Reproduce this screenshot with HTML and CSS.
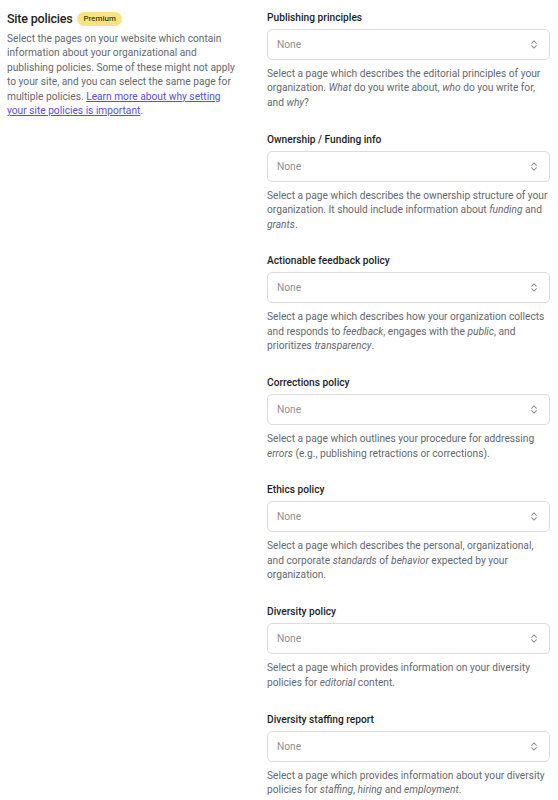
FILE: index.html
```html
<!DOCTYPE html>
<html>
<head>
<meta charset="utf-8">
<link rel="stylesheet" href="styles.css">
</head>
<body>
<div class="layout">
  <div class="intro">
    <div class="heading"><h2>Site policies</h2><span class="badge">Premium</span></div>
    <p class="desc">Select the pages on your website which contain information about your organizational and publishing policies. Some of these might not apply to your site, and you can select the same page for multiple policies. <a href="#">Learn more about why setting your site policies is important</a>.</p>
  </div>
  <div class="fields">
    <div class="field">
      <label>Publishing principles</label>
      <div class="select"><span>None</span><svg viewBox="0 0 10 14" width="8" height="11"><path d="M2 5.5 L5 2.5 L8 5.5 M2 8.5 L5 11.5 L8 8.5" fill="none" stroke="#8c8f94" stroke-width="1.3" stroke-linecap="round" stroke-linejoin="round"/></svg></div>
      <p class="help">Select a page which describes the editorial principles of your organization. <em>What</em> do you write about, <em>who</em> do you write for, and <em>why</em>?</p>
    </div>
    <div class="field">
      <label>Ownership / Funding info</label>
      <div class="select"><span>None</span><svg viewBox="0 0 10 14" width="8" height="11"><path d="M2 5.5 L5 2.5 L8 5.5 M2 8.5 L5 11.5 L8 8.5" fill="none" stroke="#8c8f94" stroke-width="1.3" stroke-linecap="round" stroke-linejoin="round"/></svg></div>
      <p class="help">Select a page which describes the ownership structure of your organization. It should include information about <em>funding</em> and <em>grants</em>.</p>
    </div>
    <div class="field">
      <label>Actionable feedback policy</label>
      <div class="select"><span>None</span><svg viewBox="0 0 10 14" width="8" height="11"><path d="M2 5.5 L5 2.5 L8 5.5 M2 8.5 L5 11.5 L8 8.5" fill="none" stroke="#8c8f94" stroke-width="1.3" stroke-linecap="round" stroke-linejoin="round"/></svg></div>
      <p class="help">Select a page which describes how your organization collects and responds to <em>feedback</em>, engages with the <em>public</em>, and prioritizes <em>transparency</em>.</p>
    </div>
    <div class="field">
      <label>Corrections policy</label>
      <div class="select"><span>None</span><svg viewBox="0 0 10 14" width="8" height="11"><path d="M2 5.5 L5 2.5 L8 5.5 M2 8.5 L5 11.5 L8 8.5" fill="none" stroke="#8c8f94" stroke-width="1.3" stroke-linecap="round" stroke-linejoin="round"/></svg></div>
      <p class="help">Select a page which outlines your procedure for addressing <em>errors</em> (e.g., publishing retractions or corrections).</p>
    </div>
    <div class="field">
      <label>Ethics policy</label>
      <div class="select"><span>None</span><svg viewBox="0 0 10 14" width="8" height="11"><path d="M2 5.5 L5 2.5 L8 5.5 M2 8.5 L5 11.5 L8 8.5" fill="none" stroke="#8c8f94" stroke-width="1.3" stroke-linecap="round" stroke-linejoin="round"/></svg></div>
      <p class="help">Select a page which describes the personal, organizational, and corporate <em>standards</em> of <em>behavior</em> expected by your organization.</p>
    </div>
    <div class="field">
      <label>Diversity policy</label>
      <div class="select"><span>None</span><svg viewBox="0 0 10 14" width="8" height="11"><path d="M2 5.5 L5 2.5 L8 5.5 M2 8.5 L5 11.5 L8 8.5" fill="none" stroke="#8c8f94" stroke-width="1.3" stroke-linecap="round" stroke-linejoin="round"/></svg></div>
      <p class="help">Select a page which provides information on your diversity policies for <em>editorial</em> content.</p>
    </div>
    <div class="field">
      <label>Diversity staffing report</label>
      <div class="select"><span>None</span><svg viewBox="0 0 10 14" width="8" height="11"><path d="M2 5.5 L5 2.5 L8 5.5 M2 8.5 L5 11.5 L8 8.5" fill="none" stroke="#8c8f94" stroke-width="1.3" stroke-linecap="round" stroke-linejoin="round"/></svg></div>
      <p class="help">Select a page which provides information about your diversity policies for <em>staffing</em>, <em>hiring</em> and <em>employment</em>.</p>
    </div>
  </div>
</div>
</body>
</html>
```
FILE: styles.css
```css
html, body { margin: 0; padding: 0; background: #fff; }
body { font-family: Roboto, "Noto Sans", sans-serif; color: #1e1e1e; }
.layout { display: flex; padding: 10px 8px 0 7px; gap: 26px; }
.intro { width: 234px; flex: none; }
.heading { display: flex; align-items: center; gap: 5px; height: 17px; }
.heading h2 { margin: 0; font-size: 12.5px; font-weight: 500; color: #1e1e1e; letter-spacing: -0.2px; }
.badge { background: #fae386; color: #4a3d00; font-size: 8px; font-weight: 500; padding: 2px 6px; border-radius: 8px; line-height: 10px; }
.desc { margin: 5px 0 0; font-size: 10.2px; line-height: 14.4px; color: #646970; }
.desc a { color: #5b4fd8; text-decoration: underline; }
.fields { flex: 1; display: flex; flex-direction: column; padding-top: 1px; }
.field { margin-bottom: 22.5px; }
label { display: block; font-size: 10.2px; font-weight: 500; color: #1e1e1e; line-height: 14px; }
.select { margin-top: 4px; height: 31px; box-sizing: border-box; border: 1px solid #dcdcde; border-radius: 5px; display: flex; align-items: center; justify-content: space-between; padding: 0 11px 0 9px; }
.select span { font-size: 10.2px; color: #8c8f94; }
.help { margin: 7px 0 0; font-size: 10.2px; line-height: 14.4px; color: #646970; }
em { font-style: italic; }
```
